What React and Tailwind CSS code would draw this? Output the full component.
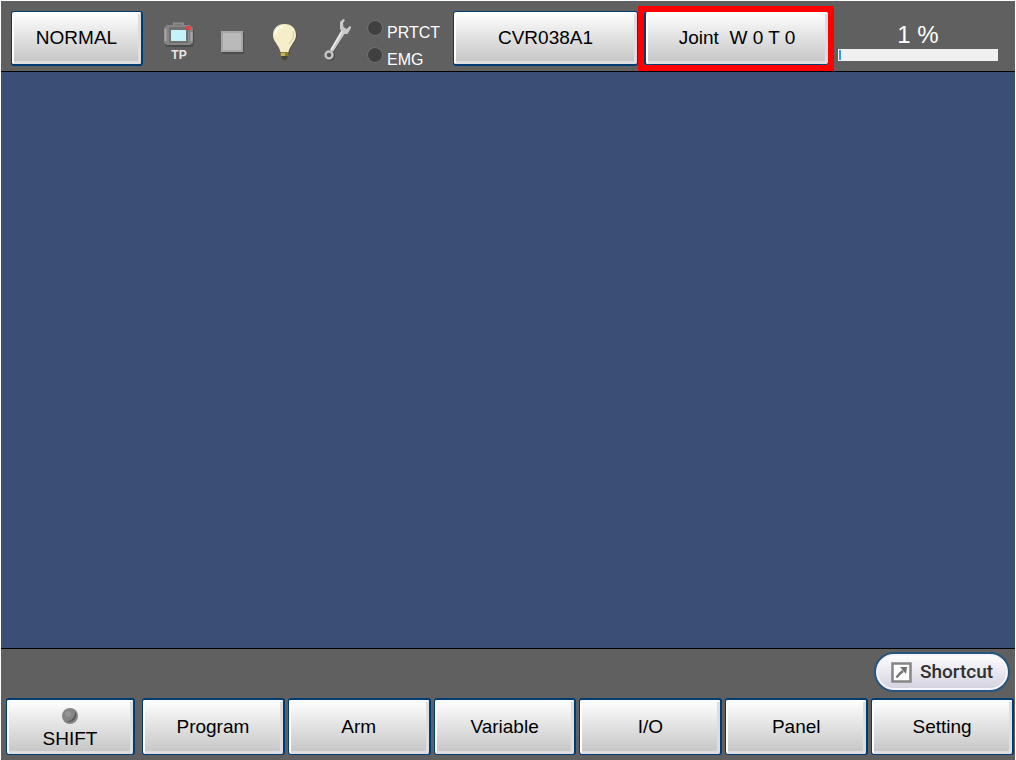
const menuItems = ['Program', 'Arm', 'Variable', 'I/O', 'Panel', 'Setting'];

function PanelButton({ className = '', children }) {
  return (
    <button
      type="button"
      className={`flex flex-col items-center justify-center min-w-0 rounded-[3px] border border-[#003c74] bg-linear-to-b from-white to-[#c4c4c4] text-[19px] leading-[22px] text-black whitespace-pre cursor-pointer shadow-[inset_2px_2px_0_#ffffff,inset_-3px_-3px_0_#dedee0] ${className}`}
    >
      {children}
    </button>
  );
}

function PendantIcon() {
  return (
    <div className="w-8 flex flex-col items-center">
      <svg width="32" height="26" viewBox="0 0 32 26" aria-hidden="true">
        <rect x="2" y="5" width="29" height="20" rx="4" fill="#4a4a4a" />
        <path d="M11 4V1.500h9V4" fill="none" stroke="#8b8b8b" strokeWidth="2" />
        <path d="M4 3h23l3 3v15l-3 2H4l-3-2V6z" fill="#858585" />
        <path d="M2.500 7v12M28.500 10v9" stroke="#a8a8a8" strokeWidth="2" />
        <rect x="6" y="5" width="19" height="16" fill="#707070" />
        <rect x="8" y="8" width="15" height="11" fill="#c5f1fa" />
        <rect x="23" y="4" width="5" height="4" rx="1" fill="#dc4545" />
      </svg>
      <span className="text-[12px] leading-[14px] font-bold text-[#e6e6e6]">TP</span>
    </div>
  );
}

function StopIcon() {
  return (
    <svg width="26" height="26" viewBox="0 0 26 26" aria-hidden="true">
      <rect x="3" y="3" width="22" height="22" rx="1" fill="#4d4d4d" />
      <rect x="2" y="2" width="22" height="21" fill="#a5a5a5" />
      <rect x="4" y="4" width="18" height="17" fill="#bababa" />
    </svg>
  );
}

function BulbIcon() {
  return (
    <svg width="30" height="40" viewBox="0 0 30 40" aria-hidden="true">
      <path d="M16 3.500C9 3.500 5 8 5 14c0 7 6 9 7 15v4h9v-4c1-6 7-9 7-15 0-6-5-10.500-12-10.500z" fill="#505050" />
      <path d="M15.500 2C8.500 2 4 6.500 4 13c0 7 6 9.500 7.500 17h8C21 22.500 27 20 27 13c0-6.500-4.500-11-11.500-11z" fill="#f5efc9" />
      <path d="M6.500 12c.5-4 3.500-7 7.500-7.500" fill="none" stroke="#fffef4" strokeWidth="2" />
      <path d="M24 9c2 6-1 9-4 13" fill="none" stroke="#ddd5ab" strokeWidth="1.500" />
      <path d="M11.500 30h8v4h-8z" fill="#8b812d" />
      <path d="M12 31h4v3h-4z" fill="#c1b75b" />
      <path d="M12.500 34h6v2l-1.500 2h-3l-1.500-2z" fill="#484535" />
    </svg>
  );
}

function WrenchIcon() {
  return (
    <svg width="28" height="44" viewBox="0 0 28 44" aria-hidden="true">
      <g fill="none" transform="translate(1 1)" stroke="#484848">
        <path d="M20 12L8 33" strokeWidth="4" />
        <circle cx="6" cy="37" r="3.500" strokeWidth="3" />
      </g>
      <path d="M20 1l-3 3v7l1.500 2L7 32l3 2 11.500-18 3 0 4-7-1.500-1-3.500 3-3-2-.5-4 2-3z" fill="#c9c9c9" />
      <path d="M19 13L8 32" stroke="#ededed" strokeWidth="1.500" />
      <circle cx="6" cy="37" r="3.500" fill="#555" stroke="#c4c4c4" strokeWidth="2.500" />
    </svg>
  );
}

function StatusLamp({ label }) {
  return (
    <div className="flex items-start gap-1 text-[16px] leading-[18px] text-white">
      <span className="size-4 rounded-full bg-[#404040] border border-[#707070]" />
      <span className="pt-1">{label}</span>
    </div>
  );
}

function ShortcutIcon() {
  return (
    <svg width="21" height="21" viewBox="0 0 21 21" aria-hidden="true">
      <rect x="1.500" y="1.500" width="18" height="18" fill="#fff" stroke="#858585" strokeWidth="2.500" />
      <path d="M5.500 15.500l3.500-4 3-2.500" fill="none" stroke="#777" strokeWidth="2.500" />
      <path d="M9 5h7l-1 7z" fill="#707070" />
    </svg>
  );
}

export default function App() {
  return (
    <div className="min-h-screen flex flex-col bg-white pt-px px-px font-['Liberation_Sans',Arial,sans-serif]">
      {/* Status bar */}
      <header className="grid grid-cols-[132fr_310fr_185fr_196fr_181fr] pl-[10px] bg-[#606060] border-b border-black">
        <PanelButton className="mt-[10px] mb-[5px] h-[55px] border-r-2 border-b-2">NORMAL</PanelButton>

        <div className="flex items-center gap-4 pl-5">
          <div className="flex items-center gap-6">
            <div className="pt-3">
              <PendantIcon />
            </div>
            <div className="pt-3">
              <StopIcon />
            </div>
            <div className="pt-3">
              <BulbIcon />
            </div>
            <div className="pt-2">
              <WrenchIcon />
            </div>
          </div>
          <div className="flex flex-col gap-[5px] pt-4">
            <StatusLamp label="PRTCT" />
            <StatusLamp label="EMG" />
          </div>
        </div>

        <PanelButton className="mt-[10px] mb-[5px] h-[55px] border-b-2">CVR038A1</PanelButton>

        <div className="mt-[5px] flex border-6 border-[#ff0000]">
          <PanelButton className="flex-1 border-l-2 border-t-0 border-r-0">{'Joint  W 0 T 0'}</PanelButton>
        </div>

        {/* Speed */}
        <div className="flex flex-col pl-1 pr-[17px] pt-5">
          <span className="text-center text-[24px] leading-[28px] text-white">1 %</span>
          <div
            role="progressbar"
            aria-label="Speed"
            aria-valuenow={1}
            aria-valuemin={0}
            aria-valuemax={100}
            className="h-3 bg-[#f0f0f0] p-px"
          >
            <div className="h-full w-[2px] bg-[#3399ff]" />
          </div>
        </div>
      </header>

      <main className="flex-1 bg-[#3b4e76]" />

      <footer className="bg-[#606060] border-t border-black pt-[3px] pb-[5px]">
        <div className="flex justify-end pr-[5px]">
          <button
            type="button"
            className="flex items-center justify-center gap-2 h-10 w-[136px] rounded-full border-2 border-[#24567f] bg-linear-to-b from-white to-[#d3d0df] shadow-[inset_0_0_0_2px_#f5f5fb] font-['Roboto',sans-serif] font-medium text-[19px] text-[#303030] cursor-pointer"
          >
            <ShortcutIcon />
            Shortcut
          </button>
        </div>

        <nav className="mt-[6px] grid grid-cols-[129fr_872fr] gap-[7px] pl-[5px] pr-px">
          <PanelButton className="h-[57px] border-t-2 border-r-2">
            <svg className="mt-1" width="16" height="16" viewBox="0 0 16 16" aria-hidden="true">
              <circle cx="8" cy="8" r="8" fill="#858585" />
              <path d="M13 3a7 7 0 0 1-9 10c4 1 10-3 9-10z" fill="#555" />
              <circle cx="6" cy="6" r="3" fill="#949494" />
            </svg>
            <span className="mt-1">SHIFT</span>
          </PanelButton>
          <div className="grid grid-cols-6 gap-[3px]">
            {menuItems.map((item) => (
              <PanelButton key={item} className="h-[57px] border-t-2 border-r-2">
                {item}
              </PanelButton>
            ))}
          </div>
        </nav>
      </footer>
    </div>
  );
}
